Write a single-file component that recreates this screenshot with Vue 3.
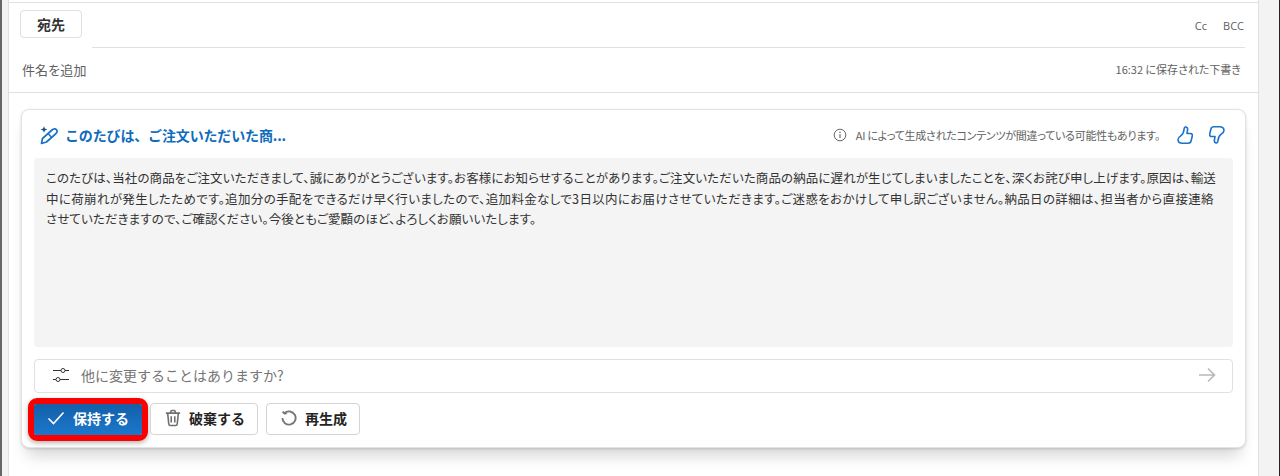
<script setup>
const lines = [
  'このたびは、当社の商品をご注文いただきまして、誠にありがとうございます。お客様にお知らせすることがあります。ご注文いただいた商品の納品に遅れが生じてしまいましたことを、深くお詫び申し上げます。原因は、輸送',
  '中に荷崩れが発生したためです。追加分の手配をできるだけ早く行いましたので、追加料金なしで3日以内にお届けさせていただきます。ご迷惑をおかけして申し訳ございません。納品日の詳細は、担当者から直接連絡',
  'させていただきますので、ご確認ください。今後ともご愛顧のほど、よろしくお願いいたします。',
]
</script>

<template>
  <div class="page">
    <main class="pane">
      <div class="to-row">
        <button class="to-btn">宛先</button>
        <div class="to-line">
          <span>Cc</span>
          <span>BCC</span>
        </div>
      </div>
      <div class="subject-row">
        <span class="subject">件名を追加</span>
        <span class="saved">16:32 に保存された下書き</span>
      </div>
      <section class="card">
        <header class="card-head">
          <svg class="wand" width="20" height="20" viewBox="0 0 20 20" fill="none">
            <path d="M5 1.2 5.9 3.6 8.3 4.5 5.9 5.4 5 7.8 4.1 5.4 1.7 4.5 4.1 3.6Z" fill="#0f4f8f"/>
            <path d="M2.5 18.5 3.5 13.5 13 5C14.5 3.7 16.5 3.5 17.5 4.7 18.5 5.9 18 7.7 16.5 9L7.5 17Z" stroke="#1a73c9" stroke-width="1.7" stroke-linejoin="round"/>
            <path d="M9.5 9 12.5 12.3" stroke="#1a73c9" stroke-width="1.5"/>
          </svg>
          <h2 class="title">このたびは、ご注文いただいた商...</h2>
          <div class="notice">
            <svg width="14" height="14" viewBox="0 0 14 14" fill="none">
              <circle cx="7" cy="7" r="5.8" stroke="#666" stroke-width="1"/>
              <path d="M7 6.2V10" stroke="#555" stroke-width="1"/>
              <circle cx="7" cy="4.3" r=".7" fill="#555"/>
            </svg>
            <span>AI によって生成されたコンテンツが間違っている可能性もあります。</span>
          </div>
          <svg class="thumb" width="16" height="18" viewBox="0 0 16 18" fill="none">
            <path d="M8.5 1C10 .9 10.8 2.2 10.6 3.8L10 7.5H13.5C15 7.5 15.6 8.8 15.3 10L14 15.3C13.6 17 12.6 17.2 11 17.2H5.5C2.8 17.2 1 15.8 1 13.5 1 11.6 2.6 10.6 4 9.6 5.8 8.3 6.8 6 7 3.5 7.1 2 7.5 1.1 8.5 1Z" stroke="#1a73c9" stroke-width="1.6" stroke-linejoin="round"/>
          </svg>
          <svg class="thumb" width="16" height="18" viewBox="0 0 16 18" fill="none">
            <path transform="rotate(180 8 9)" d="M8.5 1C10 .9 10.8 2.2 10.6 3.8L10 7.5H13.5C15 7.5 15.6 8.8 15.3 10L14 15.3C13.6 17 12.6 17.2 11 17.2H5.5C2.8 17.2 1 15.8 1 13.5 1 11.6 2.6 10.6 4 9.6 5.8 8.3 6.8 6 7 3.5 7.1 2 7.5 1.1 8.5 1Z" stroke="#1a73c9" stroke-width="1.6" stroke-linejoin="round"/>
          </svg>
        </header>
        <div class="body">
          <div v-for="line in lines" :key="line" class="line">{{ line }}</div>
        </div>
        <div class="prompt">
          <svg width="16" height="14" viewBox="0 0 16 14" fill="none" stroke="#333" stroke-width="1">
            <path d="M0 2.5H8M12 2.5H16M0 11.5H3M7 11.5H16"/>
            <circle cx="10" cy="2.5" r="2"/>
            <circle cx="5" cy="11.5" r="2"/>
          </svg>
          <span class="placeholder">他に変更することはありますか?</span>
          <svg class="send" width="18" height="16" viewBox="0 0 18 16" fill="none" stroke="#b9b9b9" stroke-width="1.6">
            <path d="M1 8H16.5M10 1.5 16.5 8 10 14.5"/>
          </svg>
        </div>
        <div class="actions">
          <div class="highlight">
            <button class="btn primary">
              <svg width="18" height="14" viewBox="0 0 18 14" fill="none" stroke="#fff" stroke-width="1.6">
                <path d="M1.5 7.5 6.5 12.5 16.5 1.5"/>
              </svg>
              保持する
            </button>
          </div>
          <button class="btn discard">
            <svg width="16" height="18" viewBox="0 0 18 20" fill="none" stroke="#707070" stroke-width="1.8">
              <path d="M1 4.5H17M6.5 4.5V2.8C6.5 2 7 1.5 7.7 1.5H10.3C11 1.5 11.5 2 11.5 2.8V4.5M3 4.5 4.2 16.5C4.3 17.7 5 18.5 6 18.5H12C13 18.5 13.7 17.7 13.8 16.5L15 4.5M7 8V15M11 8V15"/>
            </svg>
            破棄する
          </button>
          <button class="btn regen">
            <svg width="16" height="16" viewBox="0 0 16 16" fill="none" stroke="#777" stroke-width="1.9">
              <path d="M3.4 3.3A6.6 6.6 0 1 1 1.4 8M1.6 1.6 3.4 3.6 5.8 3.2"/>
            </svg>
            再生成
          </button>
        </div>
      </section>
    </main>
  </div>
</template>

<style>
html, body { margin: 0; background: #f3f3f3; }
</style>

<style scoped>
.page {
  width: 1280px;
  height: 476px;
  padding: 0 20px 0 6px;
  box-sizing: border-box;
  overflow: hidden;
  background: #f3f3f3;
  border-left: 2px solid #666;
  border-right: 1px solid #222;
  font-family: "Noto Sans CJK JP", "Open Sans", sans-serif;
  font-feature-settings: "palt";
  color: #242424;
}
.pane {
  height: 476px;
  padding-top: 2px;
  box-sizing: border-box;
  background: #fff;
  border-left: 1px solid #e0e0e0;
  border-right: 1px solid #e0e0e0;
}
.to-row {
  display: flex;
  height: 46px;
  padding: 7px 13px 0 11px;
  box-sizing: border-box;
  border-top: 1px solid #e0e0e0;
}
.to-btn {
  width: 62px;
  height: 28px;
  padding: 0;
  background: #fff;
  border: 1px solid #e0e0e0;
  border-radius: 4px;
  font: 700 14px "Noto Sans CJK JP", sans-serif;
  color: #333;
}
.to-line {
  flex: 1;
  margin-left: 10px;
  margin-top: -7px;
  border-bottom: 1px solid #e0e0e0;
  display: flex;
  justify-content: flex-end;
  align-items: flex-start;
  gap: 16px;
  padding: 15px 1px 0 0;
  font: 11px "Open Sans", sans-serif;
  color: #616161;
}
.subject-row {
  height: 42px;
  border-bottom: 1px solid #e0e0e0;
  display: flex;
  justify-content: space-between;
  align-items: center;
  padding: 0 17px 2px 13px;
}
.subject { font-size: 13px; letter-spacing: .1px; color: #616161; }
.saved { font-size: 11px; color: #616161; }
.card {
  margin: 16px 12px 0 12px;
  height: 339px;
  box-sizing: border-box;
  background: #fff;
  border: 1px solid #e3e3e3;
  border-radius: 8px;
  box-shadow: 0 14px 16px -6px rgba(0, 0, 0, .16), 0 1px 3px rgba(0, 0, 0, .15);
  padding: 0 12px;
}
.card-head {
  height: 48px;
  display: flex;
  align-items: center;
  padding: 2px 8px 0 5px;
  box-sizing: border-box;
}
.wand { margin-right: 6px; }
.title {
  margin: 0;
  font-size: 14px;
  font-weight: 700;
  font-feature-settings: normal;
  letter-spacing: -.15px;
  color: #0f6cbd;
}
.notice {
  margin-left: auto;
  display: flex;
  align-items: center;
  gap: 9px;
  font-size: 11px;
  letter-spacing: -.27px;
  color: #616161;
  margin-right: 17px;
}
.thumb + .thumb { margin-left: 16px; }
.body {
  height: 189px;
  box-sizing: border-box;
  background: #f4f4f4;
  border-radius: 4px;
  padding: 10px 12px;
  font-size: 12.5px;
  letter-spacing: .1px;
  line-height: 20.5px;
  color: #333;
}
.line { white-space: nowrap; }
.line:nth-child(2) { letter-spacing: .34px; }
.prompt {
  margin-top: 12px;
  height: 34px;
  box-sizing: border-box;
  display: flex;
  align-items: center;
  border: 1px solid #e0e0e0;
  border-radius: 4px;
  padding: 0 16px 2px 18px;
}
.placeholder {
  margin-left: 12px;
  font-size: 14px;
  font-feature-settings: normal;
  color: #757575;
}
.send { margin-left: auto; }
.actions {
  display: flex;
  align-items: center;
  gap: 8px;
  margin-top: 10px;
}
.highlight {
  margin: -6px;
  border: 6px solid #fa0000;
  border-radius: 9px;
  box-shadow: 0 2px 5px rgba(0, 0, 0, .3);
  display: flex;
}
.btn {
  height: 32px;
  display: flex;
  align-items: center;
  justify-content: center;
  gap: 8px;
  padding: 0 0 2px;
  box-sizing: border-box;
  background: #fff;
  border: 1px solid #d4d4d4;
  border-radius: 4px;
  font: 700 14px "Noto Sans CJK JP", sans-serif;
  color: #242424;
}
.primary {
  width: 108px;
  height: 31px;
  background: linear-gradient(#145fa8, #1b78cc);
  border: none;
  border-radius: 2px;
  color: #fff;
}
.discard { width: 108px; padding-left: 2px; }
.regen { width: 94px; padding-left: 2px; }
</style>
